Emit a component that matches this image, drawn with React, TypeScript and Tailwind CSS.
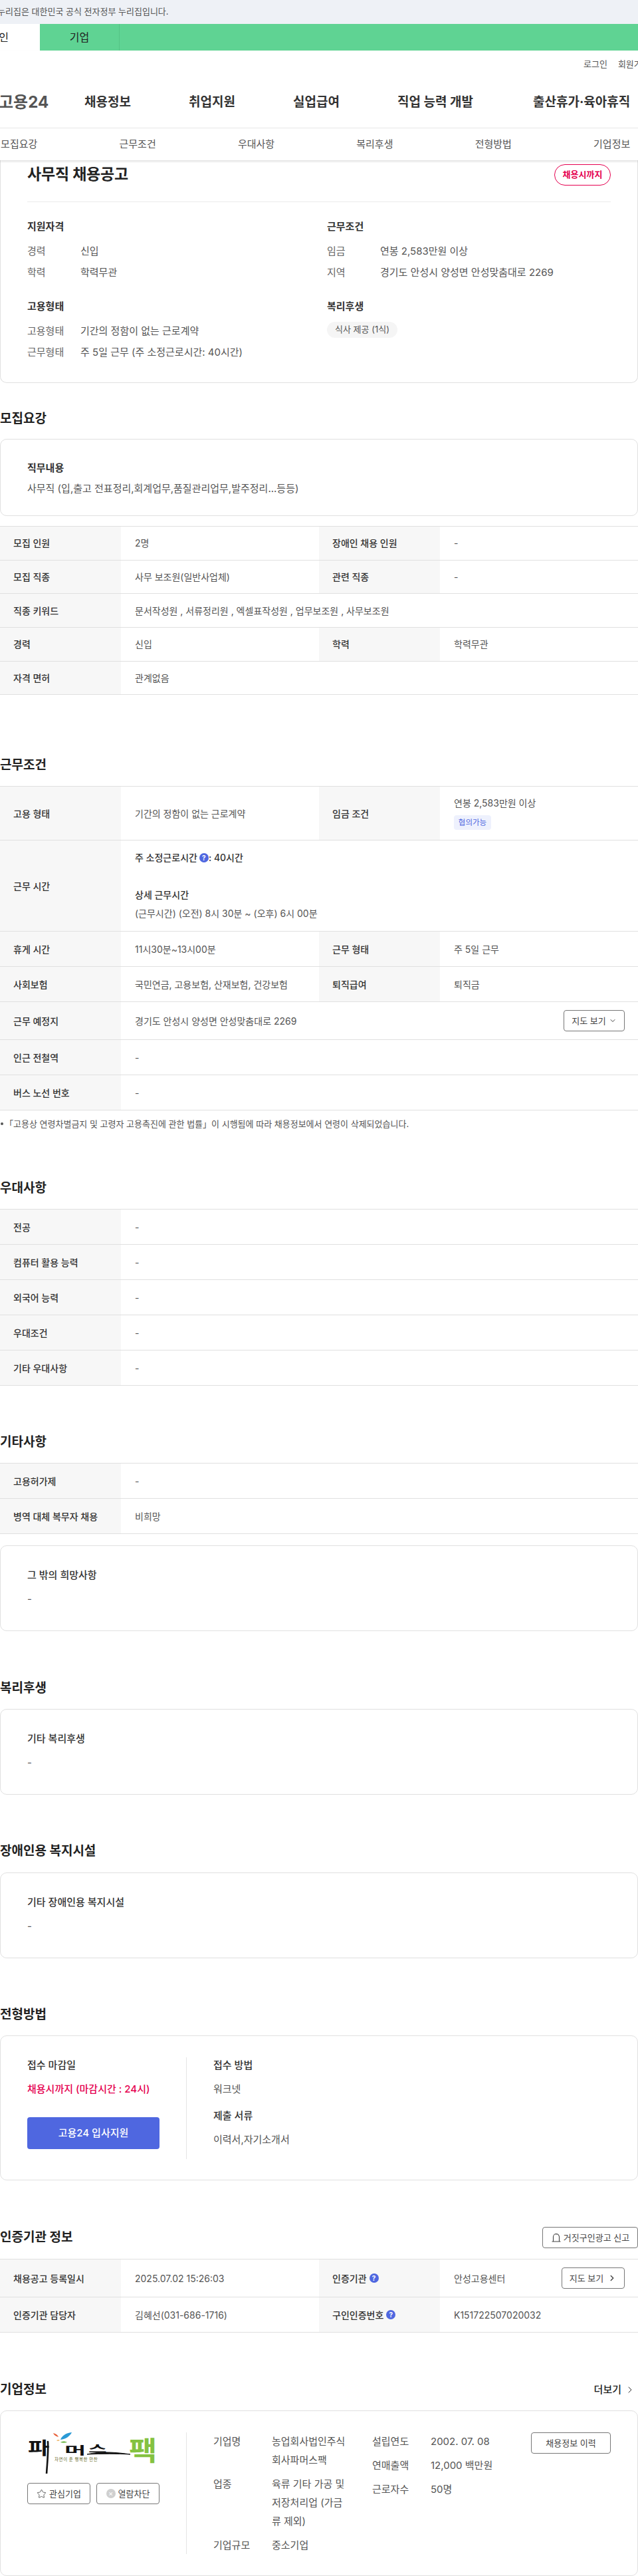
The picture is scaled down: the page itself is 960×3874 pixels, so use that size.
import React from "react";
import { Star, ChevronDown, ChevronRight } from "lucide-react";

const Q = () => (
  <span className="inline-flex h-[14px] w-[14px] shrink-0 items-center justify-center rounded-full bg-[#4f67e0] text-[10px] font-bold leading-none text-white">?</span>
);

const Heading = ({ children, className = "" }: { children: React.ReactNode; className?: string }) => (
  <h2 className={"h-[30px] text-[19px] font-bold leading-[30px] text-[#222] " + className}>{children}</h2>
);

const Th = ({ children }: { children: React.ReactNode }) => (
  <div className="flex w-[182px] shrink-0 items-center gap-[4px] self-stretch bg-[#f7f7f7] pl-[20px] text-[14px] font-medium text-[#333]">{children}</div>
);

const Td = ({ children, className = "" }: { children: React.ReactNode; className?: string }) => (
  <div className={"flex min-w-0 flex-1 items-center pl-[21px] text-[14px] text-[#555] " + className}>{children}</div>
);

const Row = ({ h, children }: { h: string; children: React.ReactNode }) => (
  <div className={"flex items-stretch border-b border-[#e0e0e0] " + h}>{children}</div>
);

const Pair = ({ a, b, c, d, h }: { a: React.ReactNode; b: React.ReactNode; c: React.ReactNode; d: React.ReactNode; h: string }) => (
  <Row h={h}>
    <Th>{a}</Th>
    <div className="flex w-[298px] shrink-0 items-center pl-[21px] text-[14px] text-[#555]">{b}</div>
    <Th>{c}</Th>
    <Td>{d}</Td>
  </Row>
);

const Box = ({ title, body, className = "" }: { title: string; body: string; className?: string }) => (
  <div className={"h-[129px] rounded-[10px] border border-[#e0e0e0] px-[40px] pt-[32px] " + className}>
    <h3 className="h-[24px] text-[15px] font-medium leading-[24px] text-[#333]">{title}</h3>
    <p className="mt-[12px] h-[24px] text-[15px] leading-[24px] text-[#555]">{body}</p>
  </div>
);

const Btn = ({ children, className = "" }: { children: React.ReactNode; className?: string }) => (
  <div className={"flex h-[32px] items-center justify-center rounded-[4px] border border-[#777] bg-white text-[13px] text-[#444] " + className}>{children}</div>
);

const InfoLine = ({ label, value }: { label: string; value: string }) => (
  <div className="mt-[8px] flex h-[24px] items-center text-[15px]">
    <span className="w-[80px] shrink-0 text-[#666]">{label}</span>
    <span className="text-[#555]">{value}</span>
  </div>
);

const Logo = () => (
  <svg viewBox="0 0 199 62" className="h-[62px] w-[199px]" fontFamily="'Noto Sans CJK KR',sans-serif">
    <path d="M39 1 C43 2 46 4 47 7 C43 6 40 4 39 1Z" fill="#e8603a" />
    <path d="M50 11 C52 5 58 1 67 0 C64 6 58 10 50 11Z" fill="#2a9ad6" />
    <path d="M50 15 C53 13 57 13 60 15 C56 16 53 16 50 15Z" fill="#6bb644" />
    <path d="M44 12 C46 11 48 11 49 12 C47 13 45 13 44 12Z" fill="#e8a03a" />
    <text transform="translate(1 33) scale(1.35 1)" fontSize="26" fontWeight="700" fill="#111">파</text>
    <path d="M31 14 C32 30 30 46 29 63" stroke="#111" strokeWidth="2.6" fill="none" strokeLinecap="round" />
    <text transform="translate(56 33) scale(2.2 1)" fontSize="16" fontWeight="700" fill="#111">머</text>
    <text transform="translate(92 30) scale(2 1)" fontSize="15" fontWeight="700" fill="#111">스</text>
    <path d="M90 33 C110 28 135 30 155 33 C135 32 112 32 90 33Z" stroke="#111" strokeWidth="1" fill="#111" />
    <text transform="translate(153 42) scale(1.15 1)" fontSize="40" fontWeight="700" fill="#84c241">팩</text>
    <text x="41" y="43" fontSize="6.5" letterSpacing="0.6" fill="#6c6c2c">자연이 준 행복한 만찬</text>
  </svg>
);

export default function App() {
  return (
    <div className="w-[960px] overflow-hidden bg-white font-['Inter','Noto_Sans_CJK_KR','Noto_Sans',sans-serif] text-[#333]">
      {/* government strip */}
      <div className="flex h-[36px] items-center overflow-hidden bg-[#eef1f6] text-[13px] text-[#555]">
        <span className="-ml-[4px] whitespace-nowrap">누리집은 대한민국 공식 전자정부 누리집입니다.</span>
      </div>
      {/* audience tabs */}
      <div className="flex h-[40px] bg-[#5fd393] text-[16px] text-[#222]">
        <div className="flex w-[60px] items-center justify-end overflow-hidden bg-white pr-[47px]"><span className="whitespace-nowrap">개인</span></div>
        <div className="flex w-[120px] items-center justify-center border-r border-[#55c486]">기업</div>
      </div>
      {/* global nav */}
      <div className="relative z-10 bg-white shadow-[0_2px_3px_rgba(0,0,0,0.12)]">
        <div className="h-[117px] border-b border-[#e8e8e8] pt-[8px]">
          <div className="flex h-[24px] gap-[16px] whitespace-nowrap pl-[878px] text-[13px] leading-[24px] text-[#555]">
            <span>로그인</span>
            <span>회원가입</span>
          </div>
          <div className="mt-[26px] flex h-[40px] items-center whitespace-nowrap text-[19px] font-bold text-[#333]">
            <span className="-ml-[2px] w-[129px] text-[24px] text-[#555]">고용24</span>
            <span className="w-[157px]">채용정보</span>
            <span className="w-[157px]">취업지원</span>
            <span className="w-[157px]">실업급여</span>
            <span className="w-[204px]">직업 능력 개발</span>
            <span>출산휴가·육아휴직</span>
          </div>
        </div>
        <div className="-ml-[60.5px] flex h-[48px] w-[1072px] items-center text-[15px] text-[#555]">
          {["모집요강", "근무조건", "우대사항", "복리후생", "전형방법", "기업정보"].map((t) => (
            <span key={t} className="w-[178.4px] text-center">{t}</span>
          ))}
        </div>
      </div>

      {/* summary card */}
      <div className="h-[335px] rounded-b-[10px] border border-t-0 border-[#e0e0e0] px-[40px] pt-[6px]">
        <div className="flex items-start justify-between border-b border-[#eaeaea] pb-[24px]">
          <h1 className="h-[30px] text-[23px] font-bold leading-[30px] tracking-[-0.2px] text-[#222]">사무직 채용공고</h1>
          <span className="flex h-[32px] w-[85px] items-center justify-center rounded-full border border-[#e5004f] text-[13px] font-bold text-[#e5004f]">채용시까지</span>
        </div>
        <div className="grid grid-cols-[451px_1fr]">
          <div className="pt-[25px]">
            <h3 className="h-[24px] text-[15px] font-bold leading-[24px]">지원자격</h3>
            <div className="pt-[5px]">
              <InfoLine label="경력" value="신입" />
              <InfoLine label="학력" value="학력무관" />
            </div>
          </div>
          <div className="pt-[25px]">
            <h3 className="h-[24px] text-[15px] font-bold leading-[24px]">근무조건</h3>
            <div className="pt-[5px]">
              <InfoLine label="임금" value="연봉 2,583만원 이상" />
              <InfoLine label="지역" value="경기도 안성시 양성면 안성맞춤대로 2269" />
            </div>
          </div>
          <div className="pt-[27px]">
            <h3 className="h-[24px] text-[15px] font-bold leading-[24px]">고용형태</h3>
            <div className="pt-[5px]">
              <InfoLine label="고용형태" value="기간의 정함이 없는 근로계약" />
              <InfoLine label="근무형태" value="주 5일 근무 (주 소정근로시간: 40시간)" />
            </div>
          </div>
          <div className="pt-[27px]">
            <h3 className="h-[24px] text-[15px] font-bold leading-[24px]">복리후생</h3>
            <span className="mt-[11px] inline-flex h-[24px] items-center rounded-full bg-[#f5f5f5] px-[12px] text-[13px] text-[#555]">식사 제공 (1식)</span>
          </div>
        </div>
      </div>

      {/* 모집요강 */}
      <Heading className="mt-[39px]">모집요강</Heading>
      <div className="mt-[15px] h-[116px] rounded-[10px] border border-[#e0e0e0] px-[40px] pt-[31px]">
        <h3 className="h-[24px] text-[15px] font-bold leading-[24px]">직무내용</h3>
        <p className="mt-[7px] h-[24px] text-[15px] leading-[24px] text-[#555]">사무직 (입,출고 전표정리,회계업무,품질관리업무,발주정리...등등)</p>
      </div>
      <div className="mt-[15px] border-t border-[#e0e0e0]">
        <Pair h="h-[50.7px]" a="모집 인원" b="2명" c="장애인 채용 인원" d="-" />
        <Pair h="h-[50.7px]" a="모집 직종" b="사무 보조원(일반사업체)" c="관련 직종" d="-" />
        <Row h="h-[50.7px]"><Th>직종 키워드</Th><Td>문서작성원 , 서류정리원 , 엑셀표작성원 , 업무보조원 , 사무보조원</Td></Row>
        <Pair h="h-[50.7px]" a="경력" b="신입" c="학력" d="학력무관" />
        <Row h="h-[50.7px]"><Th>자격 면허</Th><Td>관계없음</Td></Row>
      </div>

      {/* 근무조건 */}
      <Heading className="mt-[91px]">근무조건</Heading>
      <div className="mt-[16px] border-t border-[#e0e0e0]">
        <Row h="h-[81px]">
          <Th>고용 형태</Th>
          <div className="flex w-[298px] shrink-0 items-center pl-[21px] text-[14px] text-[#555]">기간의 정함이 없는 근로계약</div>
          <Th>임금 조건</Th>
          <div className="min-w-0 flex-1 pl-[21px] pt-[13px] text-[14px] text-[#555]">
            <p className="h-[24px] leading-[24px]">연봉 2,583만원 이상</p>
            <span className="mt-[6px] flex h-[22px] w-[56px] items-center justify-center rounded-[4px] bg-[#eef1fd] text-[11.5px] text-[#4f67e0]">협의가능</span>
          </div>
        </Row>
        <Row h="h-[137px]">
          <Th>근무 시간</Th>
          <div className="min-w-0 flex-1 pl-[21px] pt-[14px] text-[14px] leading-[24px] text-[#555]">
            <p className="flex h-[24px] items-center gap-[3px] font-medium text-[#333]"><span>주 소정근로시간</span><Q /><span className="-ml-[3px]">: 40시간</span></p>
            <p className="mt-[32px] h-[24px] font-medium text-[#333]">상세 근무시간</p>
            <p className="mt-[4px] h-[24px]">(근무시간) (오전) 8시 30분 ~ (오후) 6시 00분</p>
          </div>
        </Row>
        <Pair h="h-[53px]" a="휴게 시간" b="11시30분~13시00분" c="근무 형태" d="주 5일 근무" />
        <Pair h="h-[53px]" a="사회보험" b="국민연금, 고용보험, 산재보험, 건강보험" c="퇴직급여" d="퇴직금" />
        <Row h="h-[57px]">
          <Th>근무 예정지</Th>
          <Td className="justify-between pr-[20px]">
            <span>경기도 안성시 양성면 안성맞춤대로 2269</span>
            <Btn className="w-[92px] gap-[4px]">지도 보기<ChevronDown size={12} /></Btn>
          </Td>
        </Row>
        <Row h="h-[53px]"><Th>인근 전철역</Th><Td>-</Td></Row>
        <Row h="h-[53px]"><Th>버스 노선 번호</Th><Td>-</Td></Row>
      </div>
      <div className="mt-[8px] flex h-[24px] items-center text-[13px] text-[#555]">
        <span className="ml-[1px] mr-[2px] h-[4px] w-[4px] rounded-full bg-[#555]" />
        「고용상 연령차별금지 및 고령자 고용촉진에 관한 법률」이 시행됨에 따라 채용정보에서 연령이 삭제되었습니다.
      </div>

      {/* 우대사항 */}
      <Heading className="mt-[70px]">우대사항</Heading>
      <div className="mt-[16px] border-t border-[#e0e0e0]">
        {["전공", "컴퓨터 활용 능력", "외국어 능력", "우대조건", "기타 우대사항"].map((t) => (
          <Row key={t} h="h-[53px]"><Th>{t}</Th><Td>-</Td></Row>
        ))}
      </div>

      {/* 기타사항 */}
      <Heading className="mt-[70px]">기타사항</Heading>
      <div className="mt-[16px] border-t border-[#e0e0e0]">
        <Row h="h-[53px]"><Th>고용허가제</Th><Td>-</Td></Row>
        <Row h="h-[53px]"><Th>병역 대체 복무자 채용</Th><Td>비희망</Td></Row>
      </div>
      <Box className="mt-[17px]" title="그 밖의 희망사항" body="-" />

      {/* 복리후생 */}
      <Heading className="mt-[71px]">복리후생</Heading>
      <Box className="mt-[16px]" title="기타 복리후생" body="-" />

      {/* 장애인용 복지시설 */}
      <Heading className="mt-[70px]">장애인용 복지시설</Heading>
      <Box className="mt-[17px]" title="기타 장애인용 복지시설" body="-" />

      {/* 전형방법 */}
      <Heading className="mt-[70px]">전형방법</Heading>
      <div className="mt-[16px] flex h-[218px] rounded-[10px] border border-[#e0e0e0] pl-[40px] pt-[32px]">
        <div className="w-[199px] shrink-0">
          <h3 className="h-[24px] text-[15px] font-medium leading-[24px]">접수 마감일</h3>
          <p className="mt-[12px] h-[24px] text-[15px] font-medium leading-[24px] text-[#e5004f]">채용시까지 (마감시간 : 24시)</p>
          <div className="mt-[30px] flex h-[48px] items-center justify-center rounded-[4px] bg-[#4f67e0] text-[15px] font-medium text-white">고용24 입사지원</div>
        </div>
        <div className="ml-[40px] h-[153px] w-px bg-[#e5e5e5]" />
        <div className="ml-[40px]">
          <h3 className="h-[24px] text-[15px] font-medium leading-[24px]">접수 방법</h3>
          <p className="mt-[12px] h-[24px] text-[15px] leading-[24px] text-[#555]">워크넷</p>
          <h3 className="mt-[16px] h-[24px] text-[15px] font-medium leading-[24px]">제출 서류</h3>
          <p className="mt-[12px] h-[24px] text-[15px] leading-[24px] text-[#555]">이력서,자기소개서</p>
        </div>
      </div>

      {/* 인증기관 정보 */}
      <div className="mt-[70px] flex items-center justify-between">
        <Heading>인증기관 정보</Heading>
        <Btn className="w-[144px] gap-[3px]">
          <svg viewBox="0 0 16 16" className="h-[16px] w-[16px]" fill="none" stroke="#444" strokeWidth="1.1"><path d="M3.5 14V7a4.5 4.5 0 0 1 9 0v7M1.5 14h13M8 2.5v1" /></svg>
          거짓구인광고 신고
        </Btn>
      </div>
      <div className="mt-[16px] border-t border-[#e0e0e0]">
        <Row h="h-[57px]">
          <Th>채용공고 등록일시</Th>
          <div className="flex w-[298px] shrink-0 items-center pl-[21px] text-[14px] text-[#555]">2025.07.02 15:26:03</div>
          <Th>인증기관 <Q /></Th>
          <Td className="justify-between pr-[20px]">
            <span>안성고용센터</span>
            <Btn className="w-[95px] gap-[6px]">지도 보기<ChevronRight size={14} strokeWidth={2.4} /></Btn>
          </Td>
        </Row>
        <Row h="h-[53px]">
          <Th>인증기관 담당자</Th>
          <div className="flex w-[298px] shrink-0 items-center pl-[21px] text-[14px] text-[#555]">김혜선(031-686-1716)</div>
          <Th>구인인증번호 <Q /></Th>
          <Td>K151722507020032</Td>
        </Row>
      </div>

      {/* 기업정보 */}
      <div className="mt-[71px] flex items-center justify-between pr-[4px]">
        <Heading>기업정보</Heading>
        <span className="flex items-center gap-[5px] text-[15px] font-medium text-[#222]">더보기<ChevronRight size={16} strokeWidth={1.4} /></span>
      </div>
      <div className="mt-[16px] flex h-[249px] rounded-[10px] border border-[#e0e0e0] pl-[40px] pt-[32px] text-[15px] text-[#555]">
        <div className="w-[199px] shrink-0">
          <Logo />
          <div className="mt-[14px] flex justify-between">
            <Btn className="w-[95px] gap-[4px]"><Star size={15} strokeWidth={1.3} />관심기업</Btn>
            <Btn className="w-[95px] gap-[4px]">
              <span className="flex h-[14px] w-[14px] items-center justify-center rounded-full bg-[#d0d0d0] text-[11px] leading-none text-white">×</span>
              열람차단
            </Btn>
          </div>
        </div>
        <div className="ml-[40px] h-[183px] w-px bg-[#e5e5e5]" />
        <div className="ml-[40px] w-[239px] shrink-0 leading-[28px]">
          <div className="flex"><span className="w-[88px] shrink-0">기업명</span><span className="w-[118px] break-all">농업회사법인주식회사파머스팩</span></div>
          <div className="mt-[8px] flex"><span className="w-[88px] shrink-0">업종</span><span className="w-[118px] break-all">육류 기타 가공 및 저장처리업 (가금류 제외)</span></div>
          <div className="mt-[8px] flex"><span className="w-[88px] shrink-0">기업규모</span><span>중소기업</span></div>
        </div>
        <div className="w-[239px] shrink-0 leading-[28px]">
          <div className="flex"><span className="w-[88px] shrink-0">설립연도</span><span>2002. 07. 08</span></div>
          <div className="mt-[8px] flex"><span className="w-[88px] shrink-0">연매출액</span><span>12,000 백만원</span></div>
          <div className="mt-[8px] flex"><span className="w-[88px] shrink-0">근로자수</span><span>50명</span></div>
        </div>
        <Btn className="w-[120px]">채용정보 이력</Btn>
      </div>
    </div>
  );
}
